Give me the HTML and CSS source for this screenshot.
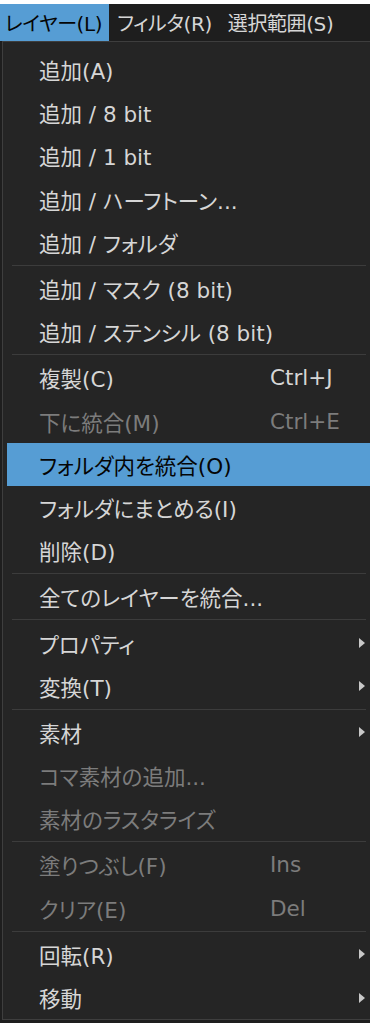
FILE: index.html
```html
<!DOCTYPE html>
<html lang="ja">
<head>
<meta charset="UTF-8">
<title>レイヤーメニュー</title>
<link rel="stylesheet" href="styles.css">
</head>
<body>

<div class="topline"></div>

<div class="menubar">
    <div class="bar-item open">レイヤー(L)</div>
    <div class="bar-item">フィルタ(R)</div>
    <div class="bar-item">選択範囲(S)</div>
</div>

<div class="menu">
    <div class="item">追加(A)</div>
    <div class="item">追加 / 8 bit</div>
    <div class="item">追加 / 1 bit</div>
    <div class="item">追加 / ハーフトーン...</div>
    <div class="item">追加 / フォルダ</div>
    <div class="sep"></div>
    <div class="item">追加 / マスク (8 bit)</div>
    <div class="item">追加 / ステンシル (8 bit)</div>
    <div class="sep"></div>
    <div class="item">複製(C)<span class="key">Ctrl+J</span></div>
    <div class="item off">下に統合(M)<span class="key">Ctrl+E</span></div>
    <div class="item hover">フォルダ内を統合(O)</div>
    <div class="item">フォルダにまとめる(I)</div>
    <div class="item">削除(D)</div>
    <div class="sep"></div>
    <div class="item">全てのレイヤーを統合...</div>
    <div class="sep"></div>
    <div class="item sub">プロパティ</div>
    <div class="item sub">変換(T)</div>
    <div class="sep"></div>
    <div class="item sub">素材</div>
    <div class="item off">コマ素材の追加...</div>
    <div class="item off">素材のラスタライズ</div>
    <div class="sep"></div>
    <div class="item off">塗りつぶし(F)<span class="key">Ins</span></div>
    <div class="item off">クリア(E)<span class="key">Del</span></div>
    <div class="sep"></div>
    <div class="item sub">回転(R)</div>
    <div class="item sub">移動</div>
</div>

</body>
</html>
```

FILE: styles.css
```css
body {
    margin: 0;
    background: #1e1e1e;
    font-family: "DejaVu Sans", "Noto Sans CJK JP", sans-serif;
    font-size: 21.5px;
    font-feature-settings: "palt";
    color: #d6d6d6;
    overflow: hidden;
}
.topline {
    height: 4px;
    background: #ffffff;
}
.menubar {
    display: flex;
    height: 37px;
    background: #1e1e1e;
    white-space: nowrap;
    font-size: 20px;
}
.bar-item {
    display: flex;
    align-items: center;
    padding: 0 8px;
    letter-spacing: -0.4px;
    color: #d6d6d6;
}
.bar-item.open {
    padding: 0 7px 0 5px;
    background: #569dd4;
    color: #050505;
}
.menu {
    margin-left: 2px;
    width: 364px;
    border: 1px solid #3e3e3e;
    background: #252525;
    padding: 6px 0 0 4px;
}
.item {
    position: relative;
    display: flex;
    align-items: center;
    height: 43.2px;
    padding-left: 32px;
    white-space: nowrap;
}
.item.off {
    color: #7c7c7c;
}
.item.hover {
    background: #569dd4;
    color: #050505;
}
.key {
    position: absolute;
    left: 263px;
}
.item.sub::after {
    content: "";
    position: absolute;
    right: 6px;
    top: 50%;
    margin-top: -5px;
    border-left: 6px solid #c8c8c8;
    border-top: 5px solid transparent;
    border-bottom: 5px solid transparent;
}
.sep {
    height: 1px;
    margin: 1px 5px 1px 5px;
    background: #3c3c3c;
}
```
